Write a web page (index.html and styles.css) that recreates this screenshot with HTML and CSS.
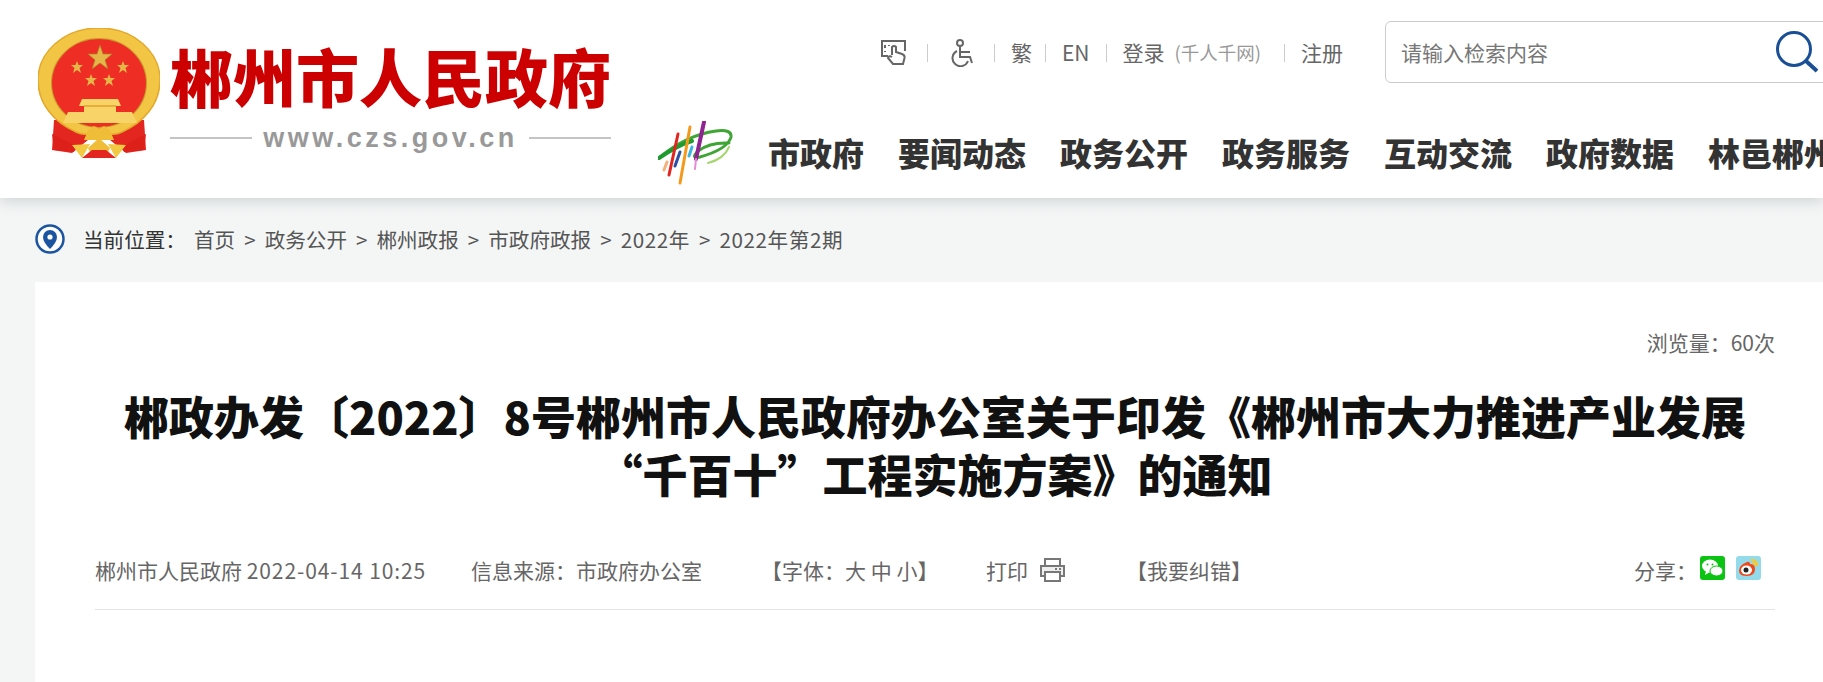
FILE: index.html
```html
<!DOCTYPE html>
<html lang="zh-CN">
<head>
  <meta charset="UTF-8" />
  <meta name="viewport" content="width=device-width, initial-scale=1.0"/>
  <title>郴州市人民政府</title>
  <link rel="stylesheet" href="styles.css">
</head>
<body>
  <header class="site-header">
    <div class="brand">
      <svg class="emblem" viewBox="0 0 122 130">
        <path d="M16 92 L14 122 L34 125 L50 112 H72 L88 125 L108 122 L106 92 Z" fill="#e3261f"/>
        <path d="M61 0C96 0 122 24 122 52C122 76 106 94 84 104Q72 110 61 100Q50 110 38 104C16 94 0 76 0 52C0 24 26 0 61 0Z" fill="#f2c544"/>
        <path d="M61 0C96 0 122 24 122 52C122 76 106 94 84 104Q72 110 61 100Q50 110 38 104C16 94 0 76 0 52C0 24 26 0 61 0Z" fill="none" stroke="#e2a92c" stroke-width="1.5"/>
        <ellipse cx="61" cy="55" rx="47" ry="44" fill="none" stroke="#c99a2e" stroke-width="2"/>
        <ellipse cx="61" cy="55" rx="47" ry="44" fill="#ee2e24"/>
        <polygon points="62,17 65,26 74,26 67,32 70,41 62,35 54,41 57,32 50,26 59,26" fill="#e6b648" stroke="#a97f2a" stroke-width=".7"/>
        <polygon points="39,33 40.5,37 45,37 41.5,40 43,45 39,42 35,45 36.5,40 33,37 37.5,37" fill="#e6b648"/>
        <polygon points="85,33 86.5,37 91,37 87.5,40 89,45 85,42 81,45 82.5,40 79,37 83.5,37" fill="#e6b648"/>
        <polygon points="53,46 54.5,50 59,50 55.5,53 57,58 53,55 49,58 50.5,53 47,50 51.5,50" fill="#e6b648"/>
        <polygon points="71,46 72.5,50 77,50 73.5,53 75,58 71,55 67,58 68.5,53 65,50 69.5,50" fill="#e6b648"/>
        <path d="M44 71H80L83 78H78V84H94L99 95H25L30 84H46V78H41Z" fill="#f8d468"/>
        <rect x="46" y="77" width="32" height="2" fill="#e6ad3a"/>
        <path d="M50 102 L56 98 L61 101 L66 98 L72 102 L76 112 H46 Z" fill="#efbd38"/>
        <path d="M14 106 L38 118 L36 124 L16 122 Z M108 106 L84 118 L86 124 L106 122 Z" fill="#dd2019"/>
        <path d="M34 117 L52 116 L44 130 Z M88 117 L70 116 L78 130 Z" fill="#f2c941"/>
        <path d="M61 110 L72 120 L68 129 H54 L50 120 Z" fill="#efbd38"/>
        <path d="M44 130 L54 122 L68 122 L78 130 Z" fill="#e3261f"/>
      </svg>
      <div class="brand-text">
        <div class="brand-name">郴州市人民政府</div>
        <div class="brand-url"><span>www.czs.gov.cn</span></div>
      </div>
    </div>
    <div class="header-right">
      <div class="tools">
        <svg class="icon-hand" viewBox="0 0 25 26" fill="none" stroke="#666" stroke-width="2">
          <path d="M7 16H1V1H24V11"/>
          <path d="M4 5V8M4 11V12M8 5V6"/>
          <path d="M11 15V7Q13 5 15 7V12L21 14Q24 15 23.5 18L22 24H12L7 18Q8 15 11 17"/>
        </svg>
        <span class="sep"></span>
        <svg class="icon-access" viewBox="0 0 24 28" fill="none" stroke="#666" stroke-width="2">
          <circle cx="10" cy="4" r="3"/>
          <path d="M10 8V18H20L22 24"/>
          <path d="M10 13H20"/>
          <path d="M7 12A8 8 0 1 0 18 22"/>
        </svg>
        <span class="sep"></span>
        <a class="tool">繁</a>
        <span class="sep sep-tight"></span>
        <a class="tool">EN</a>
        <span class="sep"></span>
        <a class="tool">登录</a>
        <span class="tool-note">(千人千网)</span>
        <span class="sep"></span>
        <a class="tool">注册</a>
        <div class="search">
          <span class="search-hint">请输入检索内容</span>
          <svg class="icon-search" viewBox="0 0 42 42" fill="none" stroke="#1a4f96">
            <circle cx="18" cy="18" r="16.5" stroke-width="3"/>
            <path d="M30 30L41 40" stroke-width="4"/>
          </svg>
        </div>
      </div>
      <nav class="nav">
        <svg class="nav-logo" viewBox="0 0 75 65" fill="none" stroke-linecap="round">
          <path d="M1 37Q28 14 58 10Q74 8 73 16Q70 28 42 36Q32 38 40 30Q52 21 71 22" stroke="#3fa535" stroke-width="3"/>
          <path d="M1 37Q20 24 34 20" stroke="#1f9a2e" stroke-width="4"/>
          <path d="M50 42Q66 38 71 26" stroke="#a5d66f" stroke-width="2"/>
          <path d="M20 13L11 54" stroke="#e1261f" stroke-width="3"/>
          <path d="M32 6L22 62" stroke="#f39a1e" stroke-width="3"/>
          <path d="M46 1L38 38" stroke="#8f2392" stroke-width="4"/>
          <path d="M38 38L37 48" stroke="#e58bd0" stroke-width="2"/>
          <path d="M22 31L17 45" stroke="#2e4fa3" stroke-width="3"/>
          <path d="M34 26L31 35" stroke="#3cb6e0" stroke-width="3"/>
          <path d="M9 41L6 49" stroke="#f2b27a" stroke-width="3"/>
        </svg>
        <a>市政府</a>
        <a>要闻动态</a>
        <a>政务公开</a>
        <a>政务服务</a>
        <a>互动交流</a>
        <a>政府数据</a>
        <a>林邑郴州</a>
      </nav>
    </div>
  </header>

  <div class="crumbs">
    <svg class="icon-pin" viewBox="0 0 30 30">
      <circle cx="15" cy="15" r="13.5" fill="#fff" stroke="#1c559f" stroke-width="2.5"/>
      <path d="M15 6A7 7 0 0 1 22 13Q22 18 15 25Q8 18 8 13A7 7 0 0 1 15 6Z" fill="#1c559f"/>
      <circle cx="15" cy="13" r="2.6" fill="#fff"/>
    </svg>
    <span class="crumbs-label">当前位置：</span>
    <a>首页</a><i>&gt;</i><a>政务公开</a><i>&gt;</i><a>郴州政报</a><i>&gt;</i><a>市政府政报</a><i>&gt;</i><a class="crumbs-num">2022年</a><i>&gt;</i><a class="crumbs-num">2022年第2期</a>
  </div>

  <main class="card">
    <div class="views">浏览量：60次</div>
    <h1 class="title">郴政办发〔2022〕8号郴州市人民政府办公室关于印发《郴州市大力推进产业发展<br>“千百十”工程实施方案》的通知</h1>
    <div class="meta">
      <span class="meta-date">郴州市人民政府 <span class="meta-time">2022-04-14 10:25</span></span>
      <span class="meta-source">信息来源：市政府办公室</span>
      <span class="meta-font">【字体：大 中 小】</span>
      <span class="meta-print">打印
        <svg class="icon-print" viewBox="0 0 25 24" fill="none" stroke="#777" stroke-width="2">
          <path d="M5 8V1H20V8"/>
          <rect x="1" y="8" width="23" height="10" fill="#eee"/>
          <rect x="5" y="14" width="15" height="9" fill="#fff"/>
          <path d="M15 11H17M19 11H21"/>
        </svg>
      </span>
      <span class="meta-fix">【我要纠错】</span>
      <span class="share">分享：
        <svg class="icon-share" viewBox="0 0 25 24">
          <rect width="25" height="24" rx="3" fill="#0bc313"/>
          <ellipse cx="10" cy="10" rx="8" ry="6.5" fill="#fff"/>
          <path d="M6 15L5 19L10 16Z" fill="#fff"/>
          <ellipse cx="16.5" cy="15" rx="6.5" ry="5" fill="#fff" stroke="#0bc313"/>
          <circle cx="7.5" cy="8.5" r="1" fill="#0bc313"/>
          <circle cx="12.5" cy="8.5" r="1" fill="#0bc313"/>
        </svg>
        <svg class="icon-share" viewBox="0 0 25 24">
          <rect width="25" height="24" rx="3" fill="#93dbea"/>
          <path d="M15 4Q21 4 21 10" fill="none" stroke="#f3c93c" stroke-width="2.5"/>
          <path d="M16 7Q19 7 19 10" fill="none" stroke="#f3c93c" stroke-width="1.5"/>
          <path d="M3 15Q3 9 11 6Q14 5 14 8Q19 8 19 13Q19 20 11 20Q3 20 3 15Z" fill="#ee4a1c"/>
          <ellipse cx="10.5" cy="14" rx="5.5" ry="4.5" fill="#fff"/>
          <circle cx="10" cy="14" r="2.5" fill="#222"/>
        </svg>
      </span>
    </div>
  </main>
</body>
</html>
```

FILE: styles.css
```css
html, body {
  height: 100%;
  overflow: hidden;
}
body {
  font-family: "Noto Sans CJK SC", "Noto Sans", sans-serif;
  background-color: #f4f6f6;
  margin: 0;
  padding: 0;
  color: #666;
}
a {
  color: inherit;
  text-decoration: none;
}

/* header */
.site-header {
  display: flex;
  height: 198px;
  background: #fff;
  box-shadow: 0 2px 14px rgba(90, 100, 100, 0.28);
  position: relative;
}
.brand {
  display: flex;
  align-items: flex-start;
  width: 658px;
  flex: none;
  padding: 28px 0 0 38px;
  box-sizing: border-box;
}
.emblem {
  width: 122px;
  height: 130px;
  flex: none;
  filter: blur(0.5px);
}
.brand-text {
  width: 441px;
  margin-left: 10px;
}
.brand-name {
  margin-top: 12px;
  font-size: 63px;
  line-height: 70px;
  font-weight: 900;
  color: #cc0000;
  white-space: nowrap;
}
.brand-url {
  display: flex;
  align-items: center;
  margin-top: 13px;
  font-family: "Liberation Sans", Arial, sans-serif;
  font-size: 27px;
  line-height: 30px;
  font-weight: bold;
  color: #999;
  letter-spacing: 3.5px;
}
.brand-url:before,
.brand-url:after {
  content: "";
  flex: 1;
  height: 2px;
  background: #c4c4c4;
}
.brand-url span {
  margin: 0 11px;
}

.header-right {
  flex: 1;
  min-width: 0;
}
.tools {
  display: flex;
  align-items: center;
  height: 62px;
  margin-top: 21px;
  padding-left: 223px;
  font-size: 21px;
  color: #666;
}
.tools > * {
  flex: none;
}
.icon-hand {
  width: 25px;
  height: 26px;
  margin: 2px 5px 0 0;
}
.icon-access {
  width: 24px;
  height: 28px;
  margin: 2px 4px 0 6px;
}
.sep {
  width: 1px;
  height: 18px;
  margin: 2px 16px 0;
  background: #ccc;
}
.sep-tight {
  margin-left: 13px;
}
.tool {
  white-space: nowrap;
}
.tool-note {
  margin: 0 7px 0 10px;
  font-size: 18.5px;
  color: #999;
  white-space: nowrap;
}
.search {
  display: flex;
  align-items: center;
  width: 450px;
  height: 62px;
  margin-left: 42px;
  padding: 0 16px 0 15px;
  background: #fff;
  border: 1px solid #ccc;
  border-radius: 6px;
  box-sizing: border-box;
  color: #777;
}
.search-hint {
  flex: 1;
}
.icon-search {
  width: 42px;
  height: 42px;
}

.nav {
  display: flex;
  align-items: center;
  gap: 34px;
  height: 65px;
  margin-top: 36px;
  font-size: 32px;
  font-weight: 900;
  color: #333;
  white-space: nowrap;
}
.nav-logo {
  width: 75px;
  height: 65px;
  flex: none;
  margin: 4px 1px 0 0;
  filter: blur(0.4px);
}

/* breadcrumb */
.crumbs {
  display: flex;
  align-items: center;
  height: 84px;
  padding: 0 0 2px 35px;
  box-sizing: border-box;
  font-size: 20.6px;
  color: #555;
}
.icon-pin {
  width: 30px;
  height: 30px;
  margin-right: 18px;
}
.crumbs-label {
  width: 111px;
  color: #333;
  white-space: nowrap;
}
.crumbs i {
  margin: 0 9px;
  font-style: normal;
}
.crumbs-num {
  letter-spacing: 0.6px;
}

/* article card */
.card {
  margin-left: 35px;
  padding: 42px 48px 0 60px;
  background: #fff;
  height: 400px;
  box-sizing: border-box;
}
.views {
  text-align: right;
  font-size: 21px;
  line-height: 36px;
}
.title {
  margin: 27px 0 0;
  text-align: center;
  font-size: 45px;
  line-height: 58px;
  font-weight: 900;
  color: #111;
  white-space: nowrap;
}
.meta {
  display: flex;
  align-items: center;
  height: 60px;
  margin-top: 37px;
  padding-bottom: 9px;
  border-bottom: 1px solid #e3e3e3;
  font-size: 21px;
  white-space: nowrap;
}
.meta-date {
  width: 376px;
}
.meta-time {
  letter-spacing: 0.9px;
}
.meta-source {
  width: 290px;
}
.meta-font {
  width: 225px;
}
.meta-print {
  display: flex;
  align-items: center;
  width: 140px;
}
.icon-print {
  width: 25px;
  height: 24px;
  margin-left: 12px;
}
.share {
  display: flex;
  align-items: center;
  margin: 0 14px 0 auto;
}
.icon-share {
  width: 25px;
  height: 24px;
  margin: -4px 0 0 3px;
}
.icon-share + .icon-share {
  margin-left: 11px;
}
```
